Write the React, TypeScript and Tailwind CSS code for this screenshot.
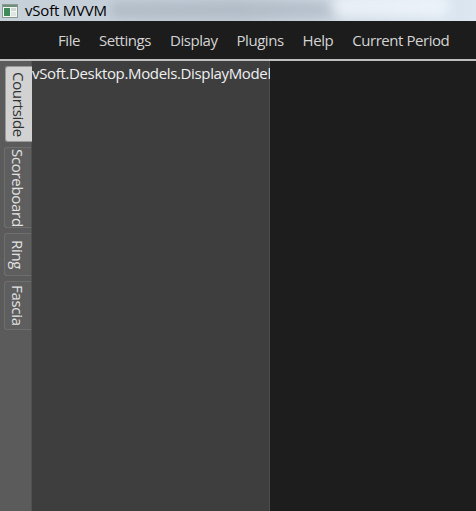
const menuItems = ["File", "Settings", "Display", "Plugins", "Help", "Current Period"];

const tabs = [
  { label: "Courtside", active: true, height: "h-[76px]" },
  { label: "Scoreboard", active: false, height: "h-[81px]" },
  { label: "Ring", active: false, height: "h-[43px]" },
  { label: "Fascia", active: false, height: "h-[49px]" },
];

function AppIcon() {
  return (
    <svg width="16" height="14" viewBox="0 0 16 14" className="shrink-0">
      <rect x="0.5" y="0.5" width="15" height="13" fill="#f4f6f4" stroke="#8a9a90" />
      <rect x="1" y="1" width="14" height="2" fill="#6f8f7a" />
      <rect x="2" y="4" width="6" height="8" fill="#3f8a5a" />
      <rect x="9" y="4" width="5" height="3" fill="#cfd8d2" />
      <rect x="9" y="8" width="5" height="4" fill="#dfe6e1" />
    </svg>
  );
}

function TitleBar() {
  return (
    <div className="relative h-[21px] overflow-hidden bg-gradient-to-r from-[#c7d1da] via-[#c2ccd6] to-[#dce7f2]">
      {/* glass behind the caption */}
      <div className="absolute left-[110px] top-[2px] w-[230px] h-[16px] rounded-full bg-[#9aa6b3] opacity-40 blur-[4px]" />
      <div className="absolute left-[330px] top-[-6px] w-[120px] h-[24px] rounded-full bg-[#f4f9ff] opacity-70 blur-[6px]" />
      <div className="relative flex items-center h-full pl-[2px] gap-[7px]">
        <AppIcon />
        <span className="text-[15px] leading-none text-black font-['Open_Sans','Noto_Sans',sans-serif] tracking-[-0.2px]">
          vSoft MVVM
        </span>
      </div>
    </div>
  );
}

function MenuBar() {
  return (
    <div className="h-[38px] bg-[#1c1c1c] border-b-2 border-[#bfbfbf] flex items-center pl-[58px] gap-[19px] box-content">
      {menuItems.map((item) => (
        <span
          key={item}
          className="text-[15px] text-[#d4d4d4] font-['Open_Sans','Noto_Sans',sans-serif] tracking-[-0.45px]"
        >
          {item}
        </span>
      ))}
    </div>
  );
}

function SideTabs() {
  return (
    <div className="w-[32px] bg-[#5b5b5b] border-r border-[#505050] flex flex-col pt-[5px] gap-[5px]">
      {tabs.map((tab) => (
        <div
          key={tab.label}
          className={
            (tab.active
              ? "ml-[5px] w-[27px] bg-[#d2d2d2] border-[#9a9a9a] "
              : "ml-[4px] w-[27px] bg-[#5e5e5e] border-[#6e6e6e] ") +
            tab.height +
            " rounded-l-[3px] border border-r-0 flex items-center justify-center"
          }
        >
          <span
            className={
              "[writing-mode:vertical-rl] text-[15px] leading-[20px] font-['Open_Sans','Noto_Sans',sans-serif] tracking-[-0.3px] " +
              (tab.active ? "text-[#333333]" : "text-[#e2e2e2]")
            }
          >
            {tab.label}
          </span>
        </div>
      ))}
    </div>
  );
}

export default function App() {
  return (
    <div className="w-[476px] h-[511px] flex flex-col bg-[#1d1d1d] overflow-hidden">
      <TitleBar />
      <MenuBar />
      <div className="flex flex-1 min-h-0">
        <SideTabs />
        <div className="w-[238px] bg-[#3e3e3e] border-r border-[#4c4c4c]">
          <div className="text-[15px] leading-[22px] text-[#f0f0f0] pt-[1px] font-['Open_Sans','Noto_Sans',sans-serif] tracking-[-0.35px] whitespace-nowrap">
            vSoft.Desktop.Models.DisplayModel
          </div>
        </div>
        <div className="flex-1 bg-[#1d1d1d]" />
      </div>
    </div>
  );
}
